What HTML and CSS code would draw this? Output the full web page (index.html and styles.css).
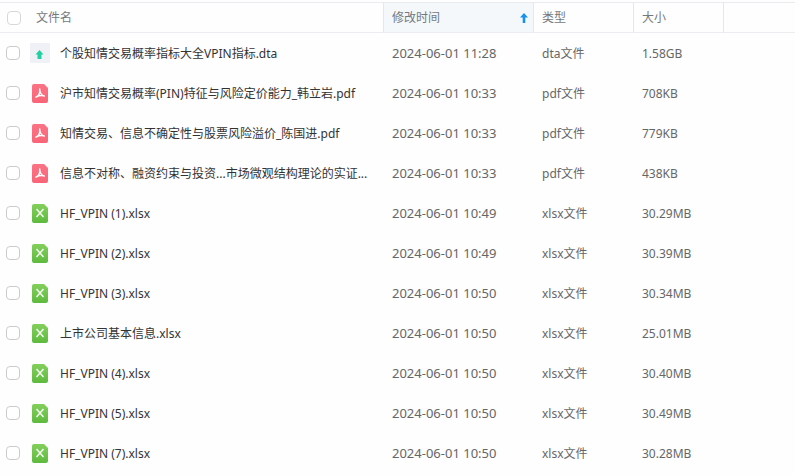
FILE: index.html
```html
<!DOCTYPE html>
<html lang="zh-CN">
<head>
<meta charset="utf-8">
<title>文件列表</title>
<link rel="stylesheet" href="styles.css">
</head>
<body>
<svg class="sprite" aria-hidden="true">
  <defs>
    <linearGradient id="red" x1="0" y1="0" x2="0" y2="1"><stop offset="0" stop-color="#fb7484"/><stop offset="1" stop-color="#f96478"/></linearGradient>
    <linearGradient id="green" x1="0" y1="0" x2="0" y2="1"><stop offset="0" stop-color="#83cf5b"/><stop offset="1" stop-color="#5eba3f"/></linearGradient>
  </defs>
  <symbol id="dta" viewBox="0 0 20 20">
    <rect width="20" height="20" rx="1" fill="#f0f1f6"/>
    <path d="M9.500 7 13.500 11.500H11.500V15.500Q11.500 16 11 16H8Q7.500 16 7.500 15.500V11.500H5.500Z" fill="#22cfa0"/>
  </symbol>
  <symbol id="pdf" viewBox="0 0 20 20">
    <path d="M4 1H14L18 5V18Q18 20 16 20H4Q2 20 2 18V3Q2 1 4 1Z" fill="url(#red)"/>
    <path d="M9.700 6C10.400 9 9.500 12 6 14.200M9.800 7C10.100 10 11.500 12.200 14.200 13M6.500 13.800C9 12.300 11.500 12.100 14 12.900" fill="none" stroke="#fff" stroke-width="1.500" stroke-linecap="round"/>
  </symbol>
  <symbol id="xlsx" viewBox="0 0 20 20">
    <path d="M4 1H14L18 5V18Q18 20 16 20H4Q2 20 2 18V3Q2 1 4 1Z" fill="url(#green)"/>
    <path d="M6.500 6 13.500 14M13.500 6 6.500 14" fill="none" stroke="#f4fbef" stroke-width="1.500"/>
  </symbol>
</svg>
<table class="files">
  <colgroup><col class="col-name"><col class="col-time"><col class="col-type"><col class="col-size"><col></colgroup>
  <thead>
    <tr>
      <th><div class="cell head-name"><input type="checkbox" id="all" aria-label="全选"><label for="all">文件名</label></div></th>
      <th class="sorted" aria-sort="ascending"><button class="sort" type="button">修改时间<svg viewBox="0 0 8 10" width="8" height="10" aria-hidden="true"><path d="M4 0 8 4.500H5.300V10H2.700V4.500H0Z" fill="#1890ee"/></svg></button></th>
      <th>类型</th>
      <th>大小</th>
      <td></td>
    </tr>
  </thead>
  <tbody id="rows"></tbody>
</table>
<script src="files.js"></script>
</body>
</html>
```
FILE: files.js
```js
const files = [
  ["个股知情交易概率指标大全VPIN指标.dta", "11:28", "dta", "1.58GB"],
  ["沪市知情交易概率(PIN)特征与风险定价能力_韩立岩.pdf", "10:33", "pdf", "708KB"],
  ["知情交易、信息不确定性与股票风险溢价_陈国进.pdf", "10:33", "pdf", "779KB"],
  ["信息不对称、融资约束与投资...市场微观结构理论的实证...", "10:33", "pdf", "438KB"],
  ["HF_VPIN (1).xlsx", "10:49", "xlsx", "30.29MB"],
  ["HF_VPIN (2).xlsx", "10:49", "xlsx", "30.39MB"],
  ["HF_VPIN (3).xlsx", "10:50", "xlsx", "30.34MB"],
  ["上市公司基本信息.xlsx", "10:50", "xlsx", "25.01MB"],
  ["HF_VPIN (4).xlsx", "10:50", "xlsx", "30.40MB"],
  ["HF_VPIN (5).xlsx", "10:50", "xlsx", "30.49MB"],
  ["HF_VPIN (7).xlsx", "10:50", "xlsx", "30.28MB"]
];
document.getElementById("rows").innerHTML = files.map(([name, time, type, size], i) => `
  <tr>
    <td><div class="cell"><input type="checkbox" id="f${i}"><svg class="icon" aria-hidden="true"><use href="#${type}"/></svg><label for="f${i}">${name}</label></div></td>
    <td class="time">2024-06-01 ${time}</td>
    <td class="info">${type}文件</td>
    <td class="info">${size}</td>
    <td></td>
  </tr>`).join("");
```
FILE: styles.css
```css
* { box-sizing: border-box; }
body {
  margin: 0;
  padding-top: 2px;
  overflow: hidden;
  background: #fefefe;
  color: #666;
  font: 12px/20px "Noto Sans", "Noto Sans CJK SC", sans-serif;
}
.sprite { position: absolute; width: 0; height: 0; }
.files {
  width: 100%;
  table-layout: fixed;
  border-spacing: 0;
}
.col-name { width: 384px; }
.col-time { width: 150px; }
.col-type { width: 100px; }
.col-size { width: 90px; }
th, td { padding: 0 8px; text-align: left; font-weight: normal; white-space: nowrap; }
th, thead td {
  height: 31px;
  border-top: 1px solid #e9ebee;
  border-bottom: 1px solid #ebedf0;
  color: #747980;
}
th { border-right: 1px solid #e4e7eb; }
tbody td { height: 40px; }
th:first-child, td:first-child { padding: 0 0 0 6px; }
.sorted { background: #f5f8fb; }
.sort {
  display: flex;
  align-items: center;
  justify-content: space-between;
  width: 100%;
  padding: 0;
  border: 0;
  background: none;
  color: inherit;
  font: inherit;
}
.sort svg { margin-right: -3px; }
.cell { display: flex; align-items: center; }
.cell label { color: #333; }
tbody label, .info { padding-top: 2px; }
.head-name { gap: 15px; padding-left: 1px; }
.head-name label { color: #747980; }
.icon { width: 20px; height: 20px; margin: 0 10px; flex: none; }
input {
  appearance: none;
  width: 14px;
  height: 14px;
  margin: 0;
  flex: none;
  border: 1px solid #ccc;
  border-radius: 4px;
  background: #fff;
}
.head-name input { border-color: #d8d8d8; }
.time { font-size: 13px; }
```
